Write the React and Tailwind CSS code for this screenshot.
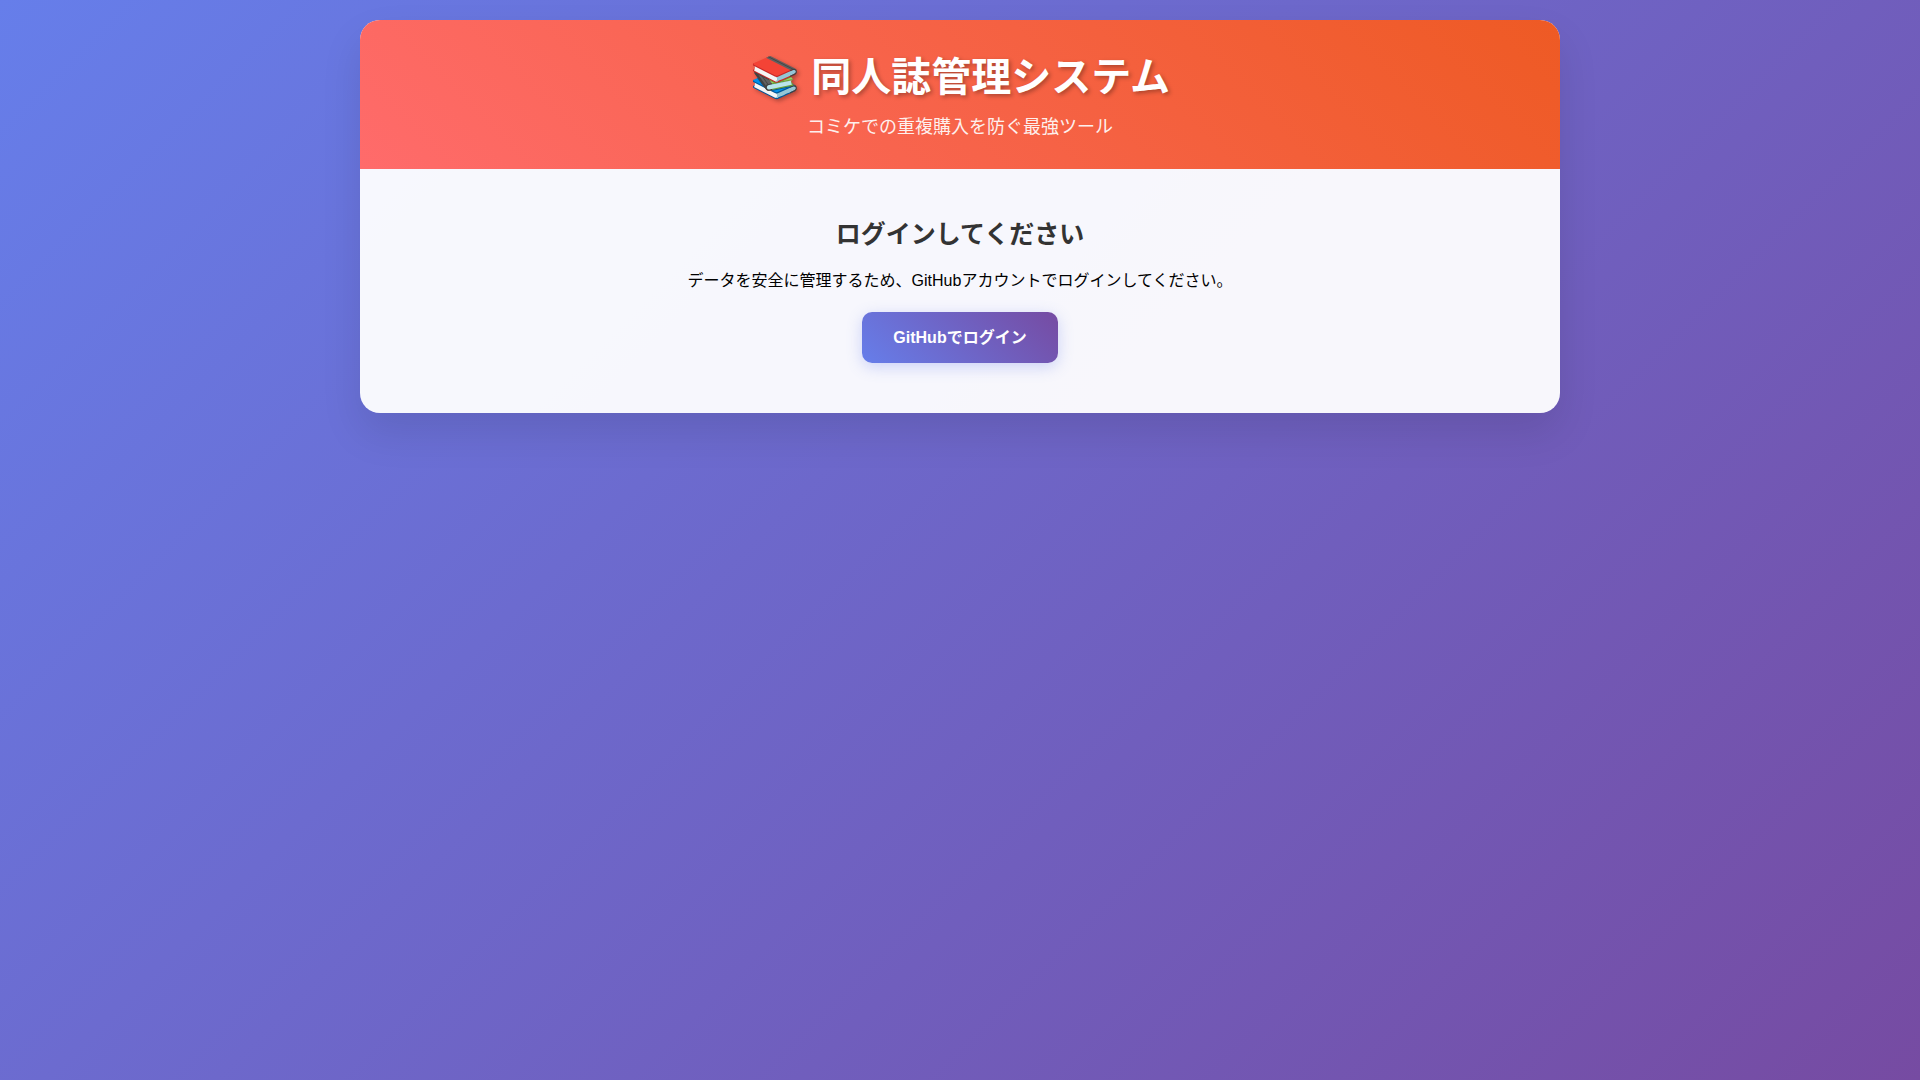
export default function App() {
  const handleLogin = () => {
    window.location.hash = "login";
  };

  return (
    <div className="min-h-screen bg-[linear-gradient(135deg,#667eea_0%,#764ba2_100%)] p-5 font-['Liberation_Sans','Noto_Sans_CJK_JP',sans-serif] text-black">
      <div className="mx-auto max-w-[1200px] overflow-hidden rounded-[20px] bg-white/95 shadow-[0_20px_40px_rgba(0,0,0,0.1)]">
        <header className="bg-[linear-gradient(45deg,#ff6b6b,#ee5a24)] p-[30px] text-center text-white">
          <h1 className="mb-3 text-[40px] leading-[54px] font-bold [text-shadow:2px_2px_4px_rgba(0,0,0,0.3)]">
            📚 同人誌管理システム
          </h1>
          <p className="text-[18px] leading-[23px] opacity-90">コミケでの重複購入を防ぐ最強ツール</p>
        </header>

        <main className="flex flex-col items-center gap-[19px] px-5 py-[50px] text-center">
          <h2 className="text-[25px] leading-[31px] font-bold text-[#333]">ログインしてください</h2>
          <p className="leading-6">データを安全に管理するため、GitHubアカウントでログインしてください。</p>
          <button
            type="button"
            className="cursor-pointer rounded-[10px] bg-[linear-gradient(45deg,#667eea,#764ba2)] px-[31px] py-[15px] leading-[21px] font-bold text-white shadow-[0_4px_15px_rgba(102,126,234,0.3)]"
            onClick={handleLogin}
          >
            GitHubでログイン
          </button>
        </main>
      </div>
    </div>
  );
}
